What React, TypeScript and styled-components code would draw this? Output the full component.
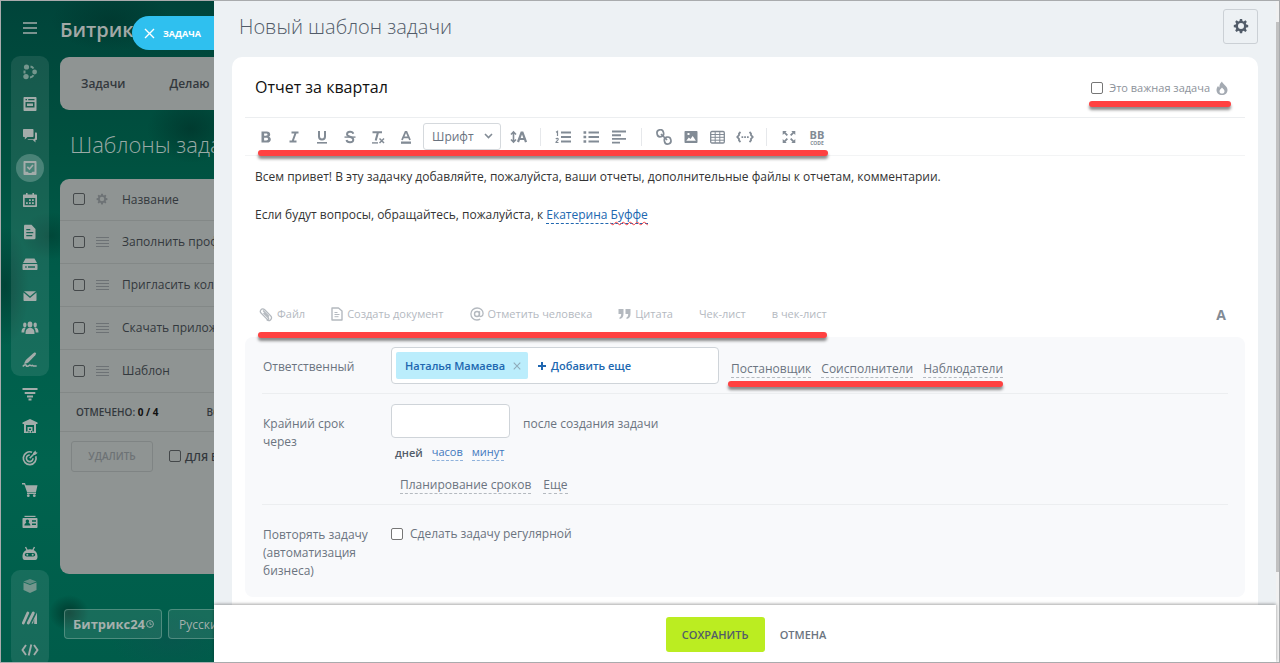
import React from 'react';
import styled, { createGlobalStyle, css } from 'styled-components';

const Global = createGlobalStyle`
  *, *::before, *::after { box-sizing: border-box; }
  body { margin: 0; font-family: 'Open Sans', 'Noto Sans', sans-serif; font-size: 12px; color: #333; }
  button, input, select { font-family: inherit; }
`;

/* ---------- shell ---------- */

const Shell = styled.div`
  display: flex;
  min-height: 100vh;
  border: 1px solid #a9abad;
  border-right: 0;
  overflow: hidden;
`;

const Backdrop = styled.div`
  position: relative;
  display: flex;
  flex: 0 0 213px;
  contain: size;
  overflow: hidden;
  background:
    radial-gradient(ellipse 44px 34px at 190px 128px, rgba(0, 30, 26, 0.4), transparent),
    radial-gradient(ellipse 60px 30px at 110px 20px, rgba(0, 36, 30, 0.35), transparent),
    radial-gradient(ellipse 24px 60px at 4px 285px, rgba(0, 30, 26, 0.4), transparent),
    radial-gradient(ellipse 30px 24px at 50px 235px, rgba(0, 40, 32, 0.35), transparent),
    radial-gradient(ellipse 20px 18px at 68px 612px, rgba(0, 30, 22, 0.55), transparent),
    radial-gradient(ellipse 60px 30px at 170px 640px, rgba(10, 84, 78, 0.6), transparent),
    linear-gradient(180deg, #00443a 0%, #00503f 22%, #005c4a 42%, #00634e 70%, #005c4a 100%);
`;

const Rail = styled.nav`
  display: flex;
  flex-direction: column;
  flex: 0 0 59px;
  padding: 0 11px 0 10px;
  color: #a3acaa;
`;

const MenuButton = styled.button`
  flex: none;
  height: 55px;
  padding: 2px 0 0;
  border: 0;
  background: none;
  color: inherit;
`;

const RailGroup = styled.div<{ $boxed?: boolean }>`
  display: flex;
  flex: none;
  flex-direction: column;
  align-items: center;
  padding-top: ${(p) => (p.$boxed ? 0 : 2)}px;
  border-radius: 9px;
  background: ${(p) => (p.$boxed ? 'rgba(255, 255, 255, 0.09)' : 'none')};
`;

const RailLink = styled.a<{ $active?: boolean; $dim?: boolean }>`
  display: flex;
  align-items: center;
  justify-content: center;
  width: 28px;
  height: 28px;
  margin: 2px 0;
  border-radius: 50%;
  color: ${(p) => (p.$dim ? '#74968d' : 'inherit')};
  background: ${(p) => (p.$active ? 'rgba(255, 255, 255, 0.22)' : 'none')};
`;

const BackMain = styled.div`
  display: flex;
  flex-direction: column;
  flex: 0 0 600px;
  > * { flex: none; }
`;

const Brand = styled.div`
  height: 56px;
  font-size: 20px;
  font-weight: 600;
  line-height: 58px;
  color: #a2a8a6;
`;

const BackTabs = styled.div`
  display: flex;
  align-items: center;
  gap: 44px;
  height: 53px;
  padding-left: 21px;
  border-radius: 9px;
  background: #8f9493;
`;

const BackTab = styled.a`
  font-size: 12px;
  font-weight: 600;
  color: #33383d;
  text-decoration: none;
`;

const BackTitle = styled.h2`
  margin: 0;
  padding-left: 10px;
  height: 69px;
  font-size: 22px;
  font-weight: 300;
  line-height: 68px;
  color: #9aaaa6;
`;

const BackCard = styled.div`
  height: 395px;
  border-radius: 9px;
  background: #8f9493;
`;

const ListTable = styled.table`
  width: 100%;
  border-collapse: collapse;
  color: #33383d;
  font-size: 12px;
  th, td {
    height: 43px;
    padding: 0;
    border-bottom: 1px solid #838887;
    font-weight: 400;
    text-align: left;
    vertical-align: middle;
  }
  th { height: 41px; }
  th:nth-child(1), td:nth-child(1) { width: 36px; padding-left: 13px; }
  th:nth-child(2), td:nth-child(2) { width: 26px; color: #6d7275; }
  svg, input { display: block; }
`;

const Box = styled.input`
  appearance: none;
  flex: none;
  width: 12px;
  height: 12px;
  margin: 0;
  border: 1px solid #767676;
  border-radius: 2px;
  background: #fff;
`;

const DarkBox = styled(Box)`
  border-color: #44484a;
  background: transparent;
`;

const Counter = styled.div`
  display: flex;
  gap: 48px;
  height: 39px;
  padding-left: 16px;
  border-bottom: 1px solid #838887;
  font-size: 10px;
  font-weight: 600;
  line-height: 38px;
  color: #33383d;
  b { color: #111; font-weight: 700; }
`;

const BackActions = styled.div`
  display: flex;
  align-items: center;
  gap: 16px;
  padding: 9px 11px;
`;

const DeleteButton = styled.button`
  width: 82px;
  height: 31px;
  border: 1px solid #7f8484;
  border-radius: 3px;
  background: none;
  color: #6d7275;
  font-size: 10px;
  font-weight: 600;
`;

const ForAll = styled.label`
  display: flex;
  align-items: center;
  gap: 4px;
  color: #33383d;
  font-size: 11px;
  font-weight: 600;
  white-space: nowrap;
`;

const BackFooter = styled.div`
  display: flex;
  gap: 6px;
  padding: 35px 4px;
`;

const GlassButton = styled.button<{ $brand?: boolean }>`
  flex: none;
  width: 98px;
  height: 30px;
  padding: 0 0 0 ${(p) => (p.$brand ? 8 : 10)}px;
  border: 1px solid rgba(160, 190, 180, 0.4);
  border-radius: 4px;
  background: rgba(200, 220, 210, 0.12);
  color: #a5b0ad;
  font-size: ${(p) => (p.$brand ? 13 : 12)}px;
  font-weight: ${(p) => (p.$brand ? 700 : 400)};
  text-align: left;
  white-space: nowrap;
  svg { margin: 0 0 4px 1px; vertical-align: middle; }
`;

const SliderLabel = styled.button`
  position: absolute;
  top: 15px;
  right: 0;
  display: flex;
  align-items: center;
  gap: 8px;
  width: 82px;
  height: 34px;
  padding: 0 0 0 12px;
  border: 0;
  border-radius: 17px 0 0 17px;
  background: #2fc0ef;
  color: #fff;
  font-size: 9px;
  font-weight: 700;
`;

/* ---------- slider panel ---------- */

const Panel = styled.main`
  display: flex;
  flex-direction: column;
  flex: 1;
  min-width: 0;
  background: #edf1f4;
`;

const PanelHead = styled.header`
  display: flex;
  align-items: center;
  justify-content: space-between;
  height: 56px;
  padding: 0 18px 6px 25px;
  h1 { margin: 0; padding-top: 2px; font-size: 20px; font-weight: 300; line-height: 28px; color: #525c69; }
`;

const GearButton = styled.button`
  display: flex;
  align-items: center;
  justify-content: center;
  width: 35px;
  height: 35px;
  padding: 0;
  border: 1px solid #cbd0d5;
  border-radius: 3px;
  background: none;
  color: #525c69;
`;

const Card = styled.section`
  flex: 1;
  margin: 0 18px;
  padding: 0 13px 8px;
  border-radius: 10px 10px 0 0;
  background: #fff;
`;

const TitleRow = styled.div`
  display: flex;
  align-items: center;
  justify-content: space-between;
  height: 61px;
  padding: 0 14px 0 10px;
  border-bottom: 1px solid #eceef0;
`;

const TitleInput = styled.input`
  flex: 1;
  min-width: 0;
  padding: 0;
  border: 0;
  outline: 0;
  background: none;
  font-size: 16px;
  line-height: 24px;
  color: #111;
`;

const Important = styled.label`
  position: relative;
  display: flex;
  align-items: center;
  gap: 6px;
  padding: 2px 3px 0 2px;
  font-size: 11px;
  line-height: 20px;
  color: #8d939b;
  svg { color: #a4aab2; }
`;

const Marker = styled.i<{ $top: number; $left?: number; $right?: number }>`
  position: absolute;
  top: ${(p) => p.$top}px;
  left: ${(p) => p.$left ?? 0}px;
  right: ${(p) => p.$right ?? 0}px;
  height: 6px;
  border-radius: 3px;
  background: #ff4141;
  box-shadow: 0 3px 3px rgba(0, 0, 0, 0.45);
  pointer-events: none;
`;

const ToolbarRow = styled.div`
  display: flex;
  height: 38px;
  border-bottom: 1px solid #f3f4f5;
`;

const Toolbar = styled.div`
  position: relative;
  display: flex;
  align-items: center;
  padding-left: 7px;
`;

const Tool = styled.button<{ $narrow?: boolean }>`
  display: flex;
  align-items: center;
  justify-content: center;
  width: ${(p) => (p.$narrow ? 27 : 28)}px;
  height: 26px;
  padding: 0;
  border: 0;
  background: none;
  color: #828b95;
`;

const Divider = styled.span`
  width: 1px;
  height: 18px;
  margin: 0 8px;
  background: #e6e8eb;
`;

const FontPicker = styled.div`
  position: relative;
  width: 78px;
  margin: 0 3px;
  color: #828b95;
  select {
    appearance: none;
    width: 100%;
    height: 27px;
    padding: 0 0 0 8px;
    border: 1px solid #d5d9dd;
    border-radius: 3px;
    background: #fff;
    color: #6a737f;
    font-size: 12px;
  }
  svg { position: absolute; top: 10px; right: 8px; pointer-events: none; }
`;

const Editor = styled.div`
  height: 136px;
  padding: 11px 11px 0 10px;
  outline: 0;
  font-size: 12px;
  line-height: 19px;
  color: #333;
  p { margin: 0 0 19px; }
`;

const Mention = styled.a`
  border-bottom: 1px dashed #2067b0;
  color: #2067b0;
  text-decoration: none;
  span { text-decoration: underline wavy #ff4141 1px; text-underline-offset: 2px; text-decoration-skip-ink: none; }
`;

const AttachRow = styled.div`
  display: flex;
  align-items: center;
  justify-content: space-between;
  height: 45px;
  padding: 0 19px 1px 0;
`;

const AttachBar = styled.div`
  position: relative;
  display: flex;
  align-items: center;
  gap: 26px;
  height: 44px;
  padding-left: 14px;
`;

const AttachButton = styled.button`
  display: flex;
  align-items: center;
  gap: 4px;
  padding: 0;
  border: 0;
  background: none;
  color: #b4b9bf;
  font-size: 11px;
  line-height: 16px;
  white-space: nowrap;
`;

const LetterButton = styled.button`
  padding: 0;
  border: 0;
  background: none;
  color: #828b95;
  font-size: 14px;
  font-weight: 700;
`;

const Options = styled.div`
  padding: 0 17px;
  border-radius: 8px;
  background: #f8f9fb;
`;

const OptionRow = styled.div<{ $height: number; $last?: boolean }>`
  display: grid;
  grid-template-columns: 129px 1fr;
  align-items: start;
  min-height: ${(p) => p.$height}px;
  padding-top: 10px;
  border-bottom: ${(p) => (p.$last ? 0 : 1)}px solid #eceef0;
`;

const OptionLabel = styled.label<{ $pad: number }>`
  max-width: 112px;
  padding: ${(p) => p.$pad}px 0 0 1px;
  font-size: 12px;
  line-height: 18px;
  color: #6b7480;
`;

const Line = styled.div<{ $gap: number; $top?: number; $left?: number }>`
  position: relative;
  display: flex;
  align-items: center;
  gap: ${(p) => p.$gap}px;
  padding: ${(p) => p.$top ?? 0}px 0 0 ${(p) => p.$left ?? 0}px;
`;

const fieldBox = css`
  border: 1px solid #cfd4d9;
  border-radius: 4px;
  background: #fff;
`;

const PeopleField = styled.div`
  ${fieldBox}
  display: flex;
  align-items: center;
  gap: 10px;
  width: 328px;
  height: 37px;
  padding-left: 4px;
`;

const Tag = styled.span`
  display: flex;
  align-items: center;
  gap: 8px;
  height: 27px;
  padding: 0 7px 0 9px;
  border-radius: 2px;
  background: #bbedfc;
  color: #2067b0;
  font-size: 11px;
  font-weight: 600;
  button { display: flex; padding: 0; border: 0; background: none; color: #8fabb9; }
`;

const AddMore = styled.button`
  display: flex;
  align-items: center;
  gap: 5px;
  padding: 0;
  border: 0;
  background: none;
  color: #2067b0;
  font-size: 11px;
  font-weight: 600;
`;

const NumberInput = styled.input`
  ${fieldBox}
  width: 119px;
  height: 34px;
  padding: 0 10px;
`;

const Dashed = styled.a<{ $blue?: boolean }>`
  border-bottom: 1px dashed ${(p) => (p.$blue ? '#8fb2dc' : '#b4b9bf')};
  color: ${(p) => (p.$blue ? '#3f78bd' : '#6b7480')};
  font-size: ${(p) => (p.$blue ? 11 : 12)}px;
  line-height: 16px;
  text-decoration: none;
`;

const RoleLinks = styled.div`
  position: relative;
  display: flex;
  gap: 10px;
  padding-top: 8px;
`;

const Hint = styled.span`
  padding-top: 5px;
  color: #6b7480;
  font-size: 12px;
`;

const CurrentUnit = styled.b`
  color: #525c69;
  font-size: 11px;
  font-weight: 600;
`;

const CheckLabel = styled.label`
  display: flex;
  align-items: center;
  gap: 7px;
  padding-top: 10px;
  font-size: 12px;
  line-height: 18px;
  color: #6b7480;
`;

const PanelFoot = styled.footer`
  position: sticky;
  bottom: 0;
  display: flex;
  align-items: center;
  justify-content: center;
  gap: 15px;
  height: 57px;
  padding: 2px 0 0 2px;
  background: #fff;
  box-shadow: 0 -1px 3px rgba(0, 0, 0, 0.35);
`;

const SaveButton = styled.button`
  width: 99px;
  height: 35px;
  padding: 0;
  border: 0;
  border-radius: 3px;
  background: #bbed21;
  color: #525c69;
  font-size: 11px;
  font-weight: 600;
`;

const CancelButton = styled.button`
  padding: 0;
  border: 0;
  background: none;
  color: #6b7480;
  font-size: 11px;
  font-weight: 600;
`;

const ScrollTrack = styled.div`
  flex: 0 0 4px;
  padding-top: 21px;
  border-right: 1px solid #a9abad;
  background: #f1f1f1;
`;

const ScrollThumb = styled.div`
  height: 86%;
  background: #c1c1c1;
`;

/* ---------- icons ---------- */

type IconProps = { w?: number; h?: number; children: React.ReactNode; box?: string };
const Icon = ({ w = 16, h = 16, box, children }: IconProps) => (
  <svg width={w} height={h} viewBox={box ?? `0 0 ${w} ${h}`} fill="currentColor" aria-hidden="true">
    {children}
  </svg>
);
const line = { fill: 'none', stroke: 'currentColor' } as const;

const Burger = () => <Icon><path d="M1 3h14M1 8h14M1 13h14" {...line} strokeWidth="1.4" /></Icon>;
const Drag = () => <Icon w={13} h={12}><path d="M0 1.500h13M0 4.500h13M0 7.500h13M0 10.500h13" {...line} strokeWidth="1" /></Icon>;
const Gear = ({ size = 16 }: { size?: number }) => (
  <Icon w={size} h={size} box="0 0 16 16">
    <path fillRule="evenodd" d="M6.9 1h2.2l.4 1.9 1.2.5 1.7-1.1 1.4 1.4-1 1.7.5 1.2 1.9.4v2.2l-1.9.4-.5 1.2 1 1.7-1.4 1.4-1.7-1.1-1.2.5-.4 1.9H6.900l-.4-1.900-1.200-.5-1.700 1.100-1.400-1.400 1-1.700-.5-1.200L.8 9.200V7l1.900-.4.5-1.200-1-1.700 1.400-1.400 1.700 1.100 1.200-.5zM8 5.100a3 3 0 1 0 0 6 3 3 0 0 0 0-6z" />
  </Icon>
);

const railTop: [string, React.ReactNode][] = [
  ['CoPilot', <Icon key="i"><circle cx="4.500" cy="3" r="2.600" /><circle cx="12.600" cy="8" r="2.400" /><circle cx="4" cy="12.600" r="2.700" /><path d="M8.500 2.500a5 5 0 0 1 3 2M2.500 6.500v3M8 13.500a5 5 0 0 0 3.500-2.300" {...line} strokeWidth="2" /></Icon>],
  ['Лента', <Icon key="i"><path fillRule="evenodd" d="M2.500 1h11c.6 0 1 .4 1 1v12c0 .6-.4 1-1 1h-11c-.6 0-1-.4-1-1V2c0-.6.4-1 1-1zM3.500 3v1.300h1.500V3zm2.700 0v1.300h6.300V3zM3.500 6v5.500h9V6zM5 7.400h6v2.600H5z" /></Icon>],
  ['Чат', <Icon key="i"><path d="M2 1h8.500c.7 0 1 .4 1 1v6c0 .6-.3 1-1 1H5.500L2.800 11.500V9H2c-.6 0-1-.4-1-1V2c0-.6.4-1 1-1z" /><path d="M13 4.500h1c.6 0 1 .4 1 1V11c0 .6-.4 1-1 1h-.5v2.500L10.800 12H6.500c-.5 0-.9-.3-1-.8h5.800c1 0 1.700-.7 1.700-1.700z" /></Icon>],
  ['Задачи', <Icon key="i"><path fillRule="evenodd" d="M2.500 1h11c.6 0 1 .4 1 1v12c0 .6-.4 1-1 1h-11c-.6 0-1-.4-1-1V2c0-.6.4-1 1-1zm1 2v8.800h2.300l1 1.200h2.500l1-1.200h2.200V3z" /><path d="M5.300 6.800l2.200 2.200 3.500-4" {...line} strokeWidth="1.700" /></Icon>],
  ['Календарь', <Icon key="i"><path fillRule="evenodd" d="M2 2.500h2V1h1.600v1.500h4.800V1H12v1.500h2c.6 0 1 .4 1 1V14c0 .6-.4 1-1 1H2c-.6 0-1-.4-1-1V3.500c0-.6.4-1 1-1zM2.700 6v7.200h10.600V6zM7 7.300h1.800v1.600H7zm3 0h1.800v1.600H10zm-6 3h1.800v1.600H4zm3 0h1.800v1.600H7zm3 0h1.800v1.600H10z" /></Icon>],
  ['Документы', <Icon key="i"><path fillRule="evenodd" d="M3 .8h6.500L13.500 5v9c0 .6-.4 1.200-1 1.200H3c-.6 0-1-.6-1-1.200V2c0-.6.400-1.200 1-1.200zM4.300 5v1.300h4V5zm0 3v1.300h7V8zm0 3v1.300h6V11z" /></Icon>],
  ['Диск', <Icon key="i"><path d="M3.500 2.500h9L15 7H1z" /><path fillRule="evenodd" d="M1.500 8h13c.6 0 1 .4 1 1v4c0 .6-.4 1-1 1h-13c-.6 0-1-.4-1-1V9c0-.6.4-1 1-1zm1.700 2.300v1.400h1.500v-1.400zm2.800 0v1.400h7v-1.400z" /></Icon>],
  ['Почта', <Icon key="i"><path d="M2 3.200h12L8 8.300z" /><path d="M1.500 4.500L8 10l6.500-5.500V12c0 .6-.4 1-1 1h-11c-.6 0-1-.4-1-1z" /></Icon>],
  ['Группы', <Icon key="i" w={18}><ellipse cx="9" cy="4.500" rx="2.400" ry="3" /><path d="M4.500 14c0-4 1-5 3-6h3c2 1 3 2 3 6z" /><ellipse cx="3.800" cy="5" rx="1.700" ry="2.400" /><ellipse cx="14.200" cy="5" rx="1.700" ry="2.400" /><path d="M.5 12.500c0-3 .8-4 2.300-4.700h2c-1 1.200-1.300 2.600-1.500 4.700zM17.500 12.500c0-3-.8-4-2.300-4.700h-2c1 1.200 1.300 2.600 1.500 4.700z" /></Icon>],
  ['Подпись', <Icon key="i"><path d="M11.300 1.200l1.700-.9 1.200 1.300-.9 1.600-7 7.200-3.600 1.500-.5-.6 1.600-3.400z" /><path d="M.8 14.500c2-2.500 3.500-2 3.500-.8s2 .3 3-.4 1.300 1 2.400.3 1 .4 2 .4h3" {...line} strokeWidth="1.600" /></Icon>],
];

const railMiddle: [string, React.ReactNode][] = [
  ['CRM', <Icon key="i"><path d="M.5 3h15M2.700 7h10.600M5 10.500h6M6.500 13.500h3" {...line} strokeWidth="2" /></Icon>],
  ['Склад', <Icon key="i"><path fillRule="evenodd" d="M8 1l7.500 3.500V6H14v9H2V6H.5V4.500zM4 7v6.500h1.500V9h5v4.500H12V7zm3 3.500V12h2v-1.500zM6.500 13h1v1.500h-1zm2.500 0h1v1.500H9z" /></Icon>],
  ['Маркетинг', <Icon key="i"><path d="M13.800 6.200A6.400 6.400 0 1 1 10 2.200" {...line} strokeWidth="1.700" /><path d="M11 8.200A3.300 3.300 0 1 1 7.800 5" {...line} strokeWidth="1.600" /><path d="M7.700 8.300l4.500-4.500" {...line} strokeWidth="1.600" /><path d="M11 3l2.500-2.500.5 1.700 1.800.5L13 5h-2z" /></Icon>],
  ['Магазин', <Icon key="i"><path d="M0 1h3l.8 2.300H15.500L14 10H5L2.300 2.600H0z" /><path d="M5 10.500h9V12H5z" /><circle cx="6.300" cy="13.700" r="1.400" /><circle cx="12.300" cy="13.700" r="1.400" /></Icon>],
  ['Сотрудники', <Icon key="i"><path d="M2.500 1.800h11V3h-11z" /><path fillRule="evenodd" d="M1.500 4h13c.6 0 1 .4 1 1v8c0 .6-.4 1-1 1h-13c-.6 0-1-.4-1-1V5c0-.6.4-1 1-1zM5.300 5.500c-1 0-1.600.8-1.600 1.700 0 .8.3 1.300.7 1.600-1.200.5-2 1.300-2 2.700h6c0-1.400-.8-2.200-2-2.700.4-.3.7-.8.7-1.600 0-.9-.7-1.700-1.800-1.700zM10 6.300v1.400h4V6.300zm0 3.200v1.400h4V9.500z" /></Icon>],
  ['Роботы', <Icon key="i"><path d="M3.500 1l1.600 3M12.500 1l-1.600 3" {...line} strokeWidth="1.400" /><path fillRule="evenodd" d="M8 3.300c4.500 0 7.500 3 7.500 7.200 0 2-.7 3.500-2.200 3.500H2.700C1.200 14 .5 12.500.5 10.500.5 6.300 3.500 3.300 8 3.300zM4.800 7C3.500 7 2.800 7.800 2.800 8.800s.7 1.700 2 1.700h6.400c1.300 0 2-.7 2-1.700S12.500 7 11.200 7z" /><circle cx="5.300" cy="8.700" r="1" /><circle cx="10.700" cy="8.700" r="1" /></Icon>],
];

const railBottom: [string, React.ReactNode, boolean][] = [
  ['Маркет', <Icon key="i"><path d="M8 1l6.500 2.500L8 6 1.500 3.500z" opacity=".8" /><path d="M1.500 4.500L8 7l6.500-2.500V12L8 15l-6.500-3z" /></Icon>, true],
  ['Сайты', <Icon key="i"><path d="M1.300 13L5.800 3M6.300 13l5-10" {...line} strokeWidth="2.800" strokeLinecap="round" /><path d="M15 2.500V14h-2.800V8.500L11 13.500H9.500z" /></Icon>, false],
  ['Разработчикам', <Icon key="i" w={18}><path d="M5 3L1.500 8 5 13M13 3l3.500 5L13 13M10.300 2.500l-2.600 11" {...line} strokeWidth="1.900" /></Icon>, false],
];

const IBold = () => <Icon w={12} h={14}><path d="M1.500 1.500h5.200c2.200 0 3.500 1 3.500 2.900 0 1.200-.6 2-1.500 2.400 1.300.3 2.100 1.300 2.100 2.600 0 2.100-1.500 3.100-3.700 3.100H1.500zm2.600 2v2.300h1.900c1 0 1.500-.4 1.500-1.200 0-.7-.5-1.100-1.500-1.100zm0 4.200v2.700h2.200c1.100 0 1.700-.4 1.700-1.400 0-.8-.6-1.300-1.700-1.300z" fillRule="evenodd" /></Icon>;
const IItalic = () => <Icon w={12} h={14}><path d="M3.500 2.500h7M1.500 11.500h7M7.800 2.500l-3.300 9" {...line} strokeWidth="2" /></Icon>;
const IUnder = () => <Icon w={12} h={14}><path d="M3 1v5.500c0 4 6 4 6 0V1" {...line} strokeWidth="2" /><path d="M1 12h10v1.600H1z" /></Icon>;
const IStrike = () => <Icon w={12} h={14}><path d="M9.300 3.700C8.500 1 3 1.200 3 4.200 3 7.500 9.300 6 9.300 9.700 9.300 13 3 13 2.500 10" {...line} strokeWidth="1.900" /><path d="M.5 6.400h11v1.400H.5z" /></Icon>;
const IClear = () => <Icon w={14} h={14}><path d="M1.500 2.200h9.500M7 2.200L4.700 10.500" {...line} strokeWidth="2.100" /><path d="M1 12.900h6" {...line} strokeWidth="1.400" /><path d="M8.500 8.500l4.500 4.500M13 8.500L8.500 13" {...line} strokeWidth="1.500" /></Icon>;
const IColor = () => <Icon w={12} h={14}><path d="M2 10L5.500 2h1L10 10M3.500 7.300h5" {...line} strokeWidth="1.800" /><path d="M1 11.500h10v2.300H1z" /></Icon>;
const ISize = () => <Icon w={17} h={14}><path d="M3.500 3v8M1 4.500L3.500 2 6 4.500M1 9.500L3.500 12 6 9.500" {...line} strokeWidth="1.600" /><path d="M8 12l3.500-9.500h1L16 12M9.500 9h5" {...line} strokeWidth="2.200" /></Icon>;
const IOl = () => <Icon w={16} h={14}><path d="M6 2.500h10M6 7h10M6 11.500h10" {...line} strokeWidth="1.900" /><path d="M1 2.300l1.500-1V6M.8 9c1-1 2.600-.7 2.400.5C3 10.500 1 11.500 1 12.500h2.500" {...line} strokeWidth="1.200" /></Icon>;
const IUl = () => <Icon w={16} h={14}><path d="M5.500 2.500h10.500M5.500 7h10.500M5.500 11.500h10.500" {...line} strokeWidth="1.900" /><path d="M.5 1.200h2.700v2.600H.5zM.5 5.700h2.700v2.600H.5zM.5 10.200h2.700v2.600H.5z" /></Icon>;
const IAlign = () => <Icon w={14} h={14}><path d="M0 1.500h14M0 5.200h9M0 8.900h14M0 12.600h8" {...line} strokeWidth="1.900" /></Icon>;
const ILink = () => <Icon><rect x="1" y=".8" width="6.500" height="7" rx="3.200" {...line} strokeWidth="1.700" transform="rotate(-12 4 4)" /><rect x="8.500" y="8" width="6.500" height="7" rx="3.200" {...line} strokeWidth="1.700" transform="rotate(-12 12 12)" /><path d="M5 5l6 6" {...line} strokeWidth="1.700" /></Icon>;
const IImage = () => <Icon w={14} h={14}><path fillRule="evenodd" d="M1.500 1h11c.6 0 1 .4 1 1v10c0 .6-.4 1-1 1h-11c-.6 0-1-.4-1-1V2c0-.6.4-1 1-1zM2.300 10.800h9.600L8.700 6 6.500 9 4.800 7.400zM3.500 3v2h2V3z" /></Icon>;
const ITable = () => <Icon w={15} h={14}><rect x=".7" y="1.500" width="13.600" height="11.500" rx="1.200" {...line} strokeWidth="1.300" /><path d="M.7 4.500h13.600M.7 7.300h13.600M.7 10.200h13.600M5.200 1.500V13M9.800 1.500V13" {...line} strokeWidth="1" /></Icon>;
const ICode = () => <Icon w={18} h={14}><path d="M4.500 2L3 3.500v1.700L1.300 7 3 8.800v1.700L4.500 12M13.500 2L15 3.500v1.700L16.700 7 15 8.800v1.700L13.500 12" {...line} strokeWidth="1.800" /><path d="M5.500 6.300H7.200v1.600H5.500zM8.200 6.300h1.700v1.600H8.200zM11 6.300h1.700v1.600H11z" /></Icon>;
const IExpand = () => <Icon w={14} h={14}><path d="M.7 5V1h4L3.500 2.300 6 4.800 4.700 6 2.200 3.500zM13.300 5V1h-4l1.200 1.300L8 4.800 9.300 6l2.500-2.500zM.7 9v4h4l-1.200-1.300L6 9.200 4.700 8l-2.500 2.500zM13.300 9v4h-4l1.200-1.300L8 9.200 9.300 8l2.500 2.500z" /></Icon>;

const BbMark = styled.span`
  display: flex;
  flex-direction: column;
  align-items: center;
  padding-top: 3px;
  font-size: 11px;
  font-weight: 700;
  line-height: 10px;
  small { font-size: 5px; line-height: 6px; }
`;

const Clip = () => <Icon w={14} h={15}><path d="M4.500 6l4.800 4.800c1 1-.4 2.200-1.300 1.300L2 6C.2 4.200 2.800 0 5.700 2.800l5.800 5.800c2.700 2.900-1 6.700-3.900 4M4 3.500l6 6" {...line} strokeWidth="1.300" /></Icon>;
const Doc = () => <Icon w={12} h={14}><path d="M1 1h6.500L11 4v9H1z" {...line} strokeWidth="1.400" strokeLinejoin="round" /><path d="M3.500 5.500h3M3.500 7.500h5M3.500 9.700h4" {...line} strokeWidth="1" /></Icon>;
const At = () => <Icon w={14} h={14}><circle cx="7" cy="7" r="2.500" {...line} strokeWidth="1.400" /><path d="M9.600 4.300L9.300 8c0 2.300 3.800 2 3.800-1.500 0-3.300-2.700-5.500-6-5.500C3.500 1 .9 3.600.9 7s2.600 6 6 6c1.300 0 2.300-.3 3.300-.9" {...line} strokeWidth="1.300" /></Icon>;
const Quote = () => <Icon w={13} h={12}><path d="M.5 1h5v5c0 3-1.500 4.500-4 5V9.500C2.700 9 3.200 8 3.200 6H.5zM7.500 1h5v5c0 3-1.500 4.500-4 5V9.500c1.200-.5 1.700-1.500 1.700-3.500H7.500z" /></Icon>;
const Flame = () => <Icon w={12} h={15}><path fillRule="evenodd" d="M6 .5c.5 2.500 5.500 4.500 5.500 8.500 0 3-2.300 5-5.500 5S.5 12 .5 9c0-2 1-3.500 1.700-4.300.2 1 .6 1.500 1.200 1.700C3.200 4 4.300 2 6 .5zm0 6C5 8 3.500 8.700 3.500 10.300c0 1.400 1 2.300 2.500 2.300s2.500-.9 2.500-2.300C8.500 8.700 7 8 6 6.500z" /></Icon>;
const Cross = ({ size = 11, weight = 1.5 }) => <Icon w={size} h={size} box="0 0 11 11"><path d="M1 1l9 9M10 1l-9 9" {...line} strokeWidth={weight} /></Icon>;
const Plus = () => <Icon w={8} h={8}><path d="M4 0v8M0 4h8" {...line} strokeWidth="2" /></Icon>;
const Chevron = () => <Icon w={9} h={6}><path d="M1 1l3.500 3.500L8 1" {...line} strokeWidth="1.600" /></Icon>;
const Clock = () => <Icon w={8} h={8}><circle cx="4" cy="4" r="3.400" {...line} strokeWidth=".9" /><path d="M4 2v2.300h1.700" {...line} strokeWidth=".8" /></Icon>;

/* ---------- data ---------- */

const templates = ['Заполнить профиль', 'Пригласить коллег', 'Скачать приложение', 'Шаблон'];

const textTools: [string, React.FC][] = [
  ['Полужирный', IBold], ['Курсив', IItalic], ['Подчёркнутый', IUnder],
  ['Зачёркнутый', IStrike], ['Очистить формат', IClear], ['Цвет текста', IColor],
];
const listTools: [string, React.FC][] = [['Нумерованный список', IOl], ['Список', IUl], ['Выравнивание', IAlign]];
const insertTools: [string, React.FC][] = [['Ссылка', ILink], ['Изображение', IImage], ['Таблица', ITable], ['Код', ICode]];

const renderTools = (tools: [string, React.FC][], narrow = false) =>
  tools.map(([name, Glyph]) => (
    <Tool key={name} type="button" aria-label={name} $narrow={narrow}><Glyph /></Tool>
  ));

const BackPage = () => (
  <Backdrop>
    <Rail>
      <MenuButton type="button" aria-label="Меню"><Burger /></MenuButton>
      <RailGroup $boxed>
        {railTop.map(([name, icon]) => (
          <RailLink key={name} href="#" aria-label={name} $active={name === 'Задачи'} $dim={name === 'CoPilot'}>{icon}</RailLink>
        ))}
      </RailGroup>
      <RailGroup>
        {railMiddle.map(([name, icon]) => <RailLink key={name} href="#" aria-label={name}>{icon}</RailLink>)}
      </RailGroup>
      <RailGroup $boxed>
        {railBottom.map(([name, icon, dim]) => <RailLink key={name} href="#" aria-label={name} $dim={dim}>{icon}</RailLink>)}
      </RailGroup>
    </Rail>
    <BackMain>
      <Brand>Битрикс</Brand>
      <BackTabs><BackTab href="#">Задачи</BackTab><BackTab href="#">Делаю</BackTab></BackTabs>
      <BackTitle>Шаблоны задач</BackTitle>
      <BackCard>
        <ListTable>
          <thead>
            <tr><th><DarkBox type="checkbox" aria-label="Выбрать все" /></th><th><Gear size={12} /></th><th>Название</th></tr>
          </thead>
          <tbody>
            {templates.map((name) => (
              <tr key={name}><td><DarkBox type="checkbox" aria-label={name} /></td><td><Drag /></td><td>{name}</td></tr>
            ))}
          </tbody>
        </ListTable>
        <Counter><span>ОТМЕЧЕНО: <b>0 / 4</b></span><span>ВСЕГО</span></Counter>
        <BackActions>
          <DeleteButton type="button">УДАЛИТЬ</DeleteButton>
          <ForAll><DarkBox type="checkbox" />ДЛЯ ВСЕХ</ForAll>
        </BackActions>
      </BackCard>
      <BackFooter>
        <GlassButton type="button" $brand>Битрикс24<Clock /></GlassButton>
        <GlassButton type="button">Русский</GlassButton>
      </BackFooter>
    </BackMain>
    <SliderLabel type="button"><Cross size={11} weight={1.4} />ЗАДАЧА</SliderLabel>
  </Backdrop>
);

export default function App() {
  return (
    <Shell>
      <Global />
      <BackPage />
      <Panel>
        <PanelHead>
          <h1>Новый шаблон задачи</h1>
          <GearButton type="button" aria-label="Настройки"><Gear /></GearButton>
        </PanelHead>
        <Card>
          <TitleRow>
            <TitleInput type="text" aria-label="Название задачи" defaultValue="Отчет за квартал" />
            <Important>
              <Box type="checkbox" />
              Это важная задача
              <Flame />
              <Marker $top={25} />
            </Important>
          </TitleRow>
          <ToolbarRow>
            <Toolbar>
              {renderTools(textTools)}
              <FontPicker>
                <select aria-label="Шрифт"><option>Шрифт</option></select>
                <Chevron />
              </FontPicker>
              <Tool type="button" aria-label="Размер шрифта"><ISize /></Tool>
              <Divider />
              {renderTools(listTools)}
              <Divider />
              {renderTools(insertTools, true)}
              <Divider />
              <Tool type="button" aria-label="Развернуть"><IExpand /></Tool>
              <Tool type="button"><BbMark>BB<small>CODE</small></BbMark></Tool>
              <Marker $top={32} $left={13} $right={3} />
            </Toolbar>
          </ToolbarRow>
          <Editor contentEditable suppressContentEditableWarning role="textbox" aria-label="Описание" spellCheck={false}>
            <p>Всем привет! В эту задачку добавляйте, пожалуйста, ваши отчеты, дополнительные файлы к отчетам, комментарии.</p>
            <p>Если будут вопросы, обращайтесь, пожалуйста, к <Mention href="#">Екатерина <span>Буффе</span></Mention></p>
          </Editor>
          <AttachRow>
            <AttachBar>
              <AttachButton type="button"><Clip />Файл</AttachButton>
              <AttachButton type="button"><Doc />Создать документ</AttachButton>
              <AttachButton type="button"><At />Отметить человека</AttachButton>
              <AttachButton type="button"><Quote />Цитата</AttachButton>
              <AttachButton type="button">Чек-лист</AttachButton>
              <AttachButton type="button">в чек-лист</AttachButton>
              <Marker $top={40} $left={13} />
            </AttachBar>
            <LetterButton type="button">A</LetterButton>
          </AttachRow>
          <Options>
            <OptionRow $height={57}>
              <OptionLabel as="span" $pad={11}>Ответственный</OptionLabel>
              <Line $gap={12}>
                <PeopleField>
                  <Tag>Наталья Мамаева<button type="button" aria-label="Убрать"><Cross size={8} /></button></Tag>
                  <AddMore type="button"><Plus />Добавить еще</AddMore>
                </PeopleField>
                <RoleLinks>
                  <Dashed href="#">Постановщик</Dashed>
                  <Dashed href="#">Соисполнители</Dashed>
                  <Dashed href="#">Наблюдатели</Dashed>
                  <Marker $top={28} $left={-3} />
                </RoleLinks>
              </Line>
            </OptionRow>
            <OptionRow $height={111}>
              <OptionLabel htmlFor="deadline" $pad={11}>Крайний срок через</OptionLabel>
              <div>
                <Line $gap={13}><NumberInput id="deadline" type="text" /><Hint>после создания задачи</Hint></Line>
                <Line $gap={9} $top={6} $left={4}>
                  <CurrentUnit>дней</CurrentUnit>
                  <Dashed $blue href="#">часов</Dashed>
                  <Dashed $blue href="#">минут</Dashed>
                </Line>
                <Line $gap={12} $top={16} $left={9}>
                  <Dashed href="#">Планирование сроков</Dashed>
                  <Dashed href="#">Еще</Dashed>
                </Line>
              </div>
            </OptionRow>
            <OptionRow $height={92} $last>
              <OptionLabel as="span" $pad={11}>Повторять задачу (автоматизация бизнеса)</OptionLabel>
              <CheckLabel><Box type="checkbox" />Сделать задачу регулярной</CheckLabel>
            </OptionRow>
          </Options>
        </Card>
        <PanelFoot>
          <SaveButton type="button">СОХРАНИТЬ</SaveButton>
          <CancelButton type="button">ОТМЕНА</CancelButton>
        </PanelFoot>
      </Panel>
      <ScrollTrack><ScrollThumb /></ScrollTrack>
    </Shell>
  );
}
